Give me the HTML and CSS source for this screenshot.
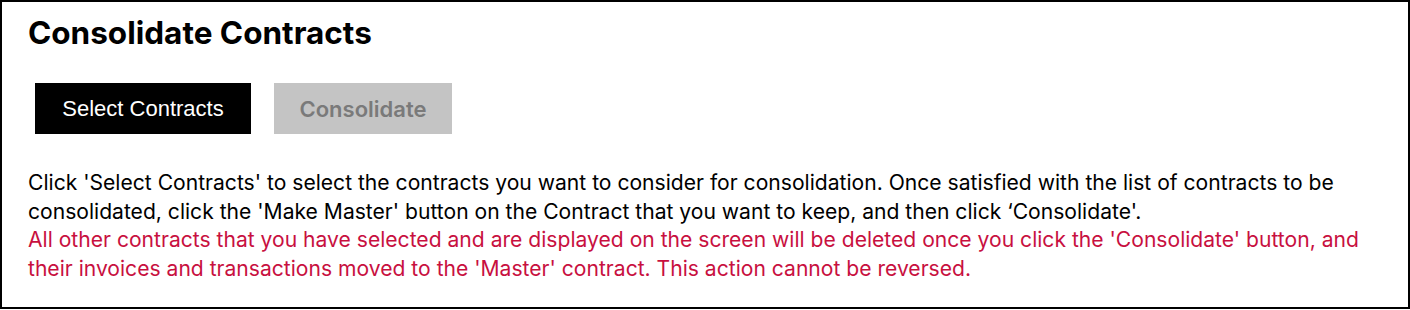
FILE: index.html
```html
<!DOCTYPE html>
<html lang="en">
<head>
    <meta charset="UTF-8">
    <meta name="viewport" content="width=device-width, initial-scale=1.0">
    <title>Consolidate Contracts</title>
    <link rel="stylesheet" href="styles.css">
</head>
<body>
    <div class="panel">
        <h1 class="panel-title">Consolidate Contracts</h1>

        <div class="buttons-container">
            <button type="button" class="btn btn-primary">Select Contracts</button>
            <button type="button" class="btn btn-disabled" disabled>Consolidate</button>
        </div>

        <p class="help-text">
            Click 'Select Contracts' to select the contracts you want to consider for consolidation. Once satisfied with the list of contracts to be consolidated, click the 'Make Master' button on the Contract that you want to keep, and then click ‘Consolidate'.
            <span class="warning">All other contracts that you have selected and are displayed on the screen will be deleted once you click the 'Consolidate' button, and their invoices and transactions moved to the 'Master' contract. This action cannot be reversed.</span>
        </p>
    </div>
</body>
</html>
```

FILE: styles.css
```css
/* Consolidate panel */
html, body {
    margin: 0;
    padding: 0;
    background: #fff;
}

body {
    font-family: Inter, "Noto Sans", sans-serif;
    color: #000;
}

.panel {
    box-sizing: border-box;
    width: 1410px;
    height: 309px;
    border: 2px solid #000;
    padding: 14px 26px 0 26px;
}

.panel-title {
    margin: 0;
    font-size: 31.5px;
    font-weight: 700;
    line-height: 34px;
}

.buttons-container {
    display: flex;
    gap: 23px;
    margin-top: 33px;
    padding-left: 7px;
}

.btn {
    height: 51px;
    border: none;
    border-radius: 0;
    font-size: 22px;
    cursor: pointer;
}

.btn-primary {
    width: 216px;
    background: #000;
    color: #fff;
    font-family: "Liberation Sans", Arial, sans-serif;
}

.btn-disabled {
    width: 178px;
    background: #c4c4c4;
    color: #7a7a7a;
    font-family: Inter, sans-serif;
    font-weight: 600;
    cursor: default;
}

.help-text {
    margin: 35px 0 0 0;
    font-size: 21.1px;
    line-height: 28.7px;
}

.warning {
    display: block;
    color: #c8103f;
}
```
